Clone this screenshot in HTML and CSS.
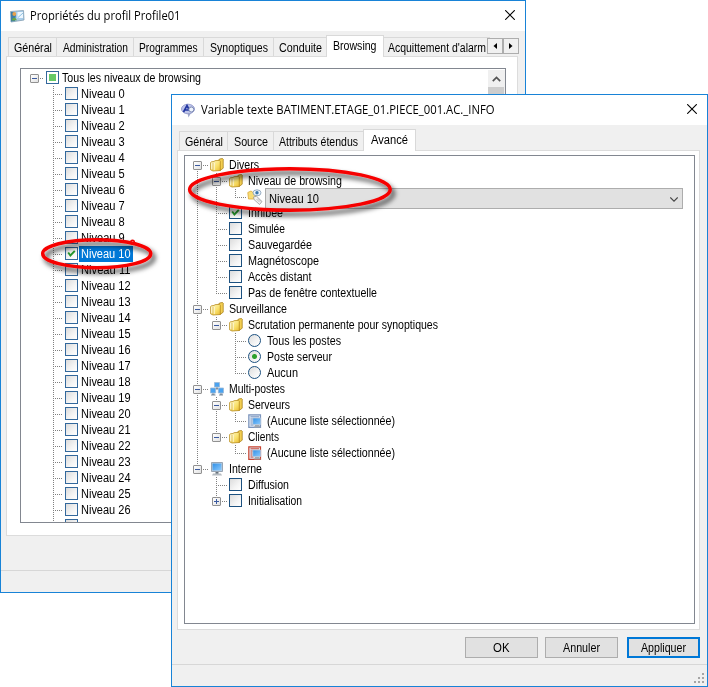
FILE: index.html
```html
<!DOCTYPE html>
<html lang="fr">
<head>
<meta charset="utf-8">
<title>Propriétés du profil</title>
<link rel="stylesheet" href="styles.css">
</head>
<body>
<svg class="defs" width="0" height="0">
  <defs>
    <linearGradient id="gold" x1="0" y1="0" x2="1" y2="1"><stop offset="0" stop-color="#fffad0"/><stop offset=".6" stop-color="#f9e06a"/><stop offset="1" stop-color="#e8b930"/></linearGradient>
    <linearGradient id="screen" x1="0" y1="0" x2="1" y2="1"><stop offset="0" stop-color="#2f8fe6"/><stop offset="1" stop-color="#8ccbff"/></linearGradient>
    <symbol id="folder" viewBox="0 0 14 14"><path d="M8.500 2.500 9.500 1 12.500.5l.7.7v9l-3.200 2.300z" fill="#f3cf52" stroke="#a8801a" stroke-width=".8"/><path d="M.6 4.500 1.500 3.800 4 3.500l1-.8 4.500-.4.8.8v9.400L3 13 .6 11.800z" fill="url(#gold)" stroke="#b88c1c" stroke-width=".8"/><path d="M3 5v7.300" stroke="#c9a030" stroke-width=".7"/><path d="M1.800 5.200v6M4.200 4.800v7.300" stroke="#fff" stroke-opacity=".8" stroke-width=".9"/></symbol>
    <symbol id="pc" viewBox="0 0 14 14"><path d="M1.500.5h11v9h-11z" fill="#c6d0da" stroke="#98a5b3"/><path d="M2.500 1.500h9V8.500h-9z" fill="url(#screen)"/><path d="M5.500 10h3v2h-3z" fill="#6b747d"/><path d="M3 11.500h8l1 2H2z" fill="#b5bbc1"/></symbol>
    <symbol id="net" viewBox="0 0 14 14"><path d="M4.500.5h5v4.500h-5zM.5 6h5.200v5H.5zM8.300 6h5.200v5H8.300z" fill="#4aa3f0" stroke="#9db8d4" stroke-width=".8"/><path d="M6 5.500h2v2H6zM2 11.500h2.500V12.500H5.500v1H1v-1h1zM10 11.500h2.500V12.500h.5v1H9v-1h1z" fill="#7f8f9f"/></symbol>
    <symbol id="list" viewBox="0 0 14 14"><path d="M.8.8h11.700v12.500H.8z" fill="#dfe8f5" stroke="currentColor" stroke-width="1.200"/><path d="M2.500 2.800h8.500M2.500 5h3M2.500 7h2M2.500 9h2M2.500 11h3" stroke="currentColor"/><path d="M4.800 4h7.900v6.500H4.800z" fill="url(#screen)" stroke="#b5c6da" stroke-width=".8"/><path d="M7 11h4l2 2.500H6z" fill="#a1a8b0"/></symbol>
    <symbol id="tag" viewBox="0 0 16 16"><path d="M.8 3.500 4 2l2 1.500h3v6.500H1.500z" fill="#f8dc74" stroke="#dba93a" stroke-width=".8"/><ellipse cx="10" cy="3.800" rx="4" ry="3" fill="#edf5fc" stroke="#7f99b2" stroke-width=".8"/><circle cx="10" cy="3.800" r="1.700" fill="#3977ad"/><path d="M6.500 8l3-.8 5.500 5.300-2.500 3L7 10.500z" fill="#f1f1f1" stroke="#999" stroke-width=".8"/><path d="M9.500 10l3 3M11 9.500l3 3" stroke="#aaa" stroke-width=".7"/></symbol>
    <symbol id="chk" viewBox="0 0 11 11"><path d="M2.200 4.500 4.400 7.500 8.800 2.800" fill="none" stroke="#26952b" stroke-width="1.900"/></symbol>
    <symbol id="close" viewBox="0 0 10 10"><path d="M.2.200 9.800 9.800M9.800.2.200 9.800" stroke="#000" stroke-width="1.100"/></symbol>
    <filter id="shadow" x="-20%" y="-40%" width="150%" height="200%"><feDropShadow dx="3" dy="4" stdDeviation="2.800" flood-color="#000" flood-opacity=".75"/></filter>
  </defs>
</svg>

<section class="window profile">
  <header class="titlebar">
    <svg class="title-icon" viewBox="0 0 15 15"><path d="M.5 2.500 13.500 1.500 14 11 1 13z" fill="#a9cdea" stroke="#829db1" stroke-width=".8"/><path d="M7.500 3h5.500v6h-5.500z" fill="#edf7ff"/><path d="M1 3h3l2 3-1 6-4 .5z" fill="#3b7ea9"/><circle cx="4.300" cy="5" r="1.900" fill="#e9a24c"/><path d="M1.500 11.500q2.500-6 5.500-.3z" fill="#69a744"/><path d="M8 8.500 13 4" stroke="#8dc1e3"/></svg>
    <h1><span data-w="150.500">Propriétés du profil Profile01</span></h1>
    <svg class="close"><use href="#close"/></svg>
  </header>
  <nav class="tabs">
    <span class="tab w49"><span data-w="38">Général</span></span><span class="tab w77"><span data-w="65">Administration</span></span><span class="tab w70"><span data-w="58.500">Programmes</span></span><span class="tab w70"><span data-w="58">Synoptiques</span></span><span class="tab w53"><span data-w="43">Conduite</span></span><span class="tab active w58"><span data-w="43.500">Browsing</span></span><span class="tab last"><span data-w="98">Acquittement d'alarm</span></span>
    <span class="spin"><i><svg viewBox="0 0 4 6"><path d="M4 0v6L.5 3z"/></svg></i><i><svg viewBox="0 0 4 6"><path d="M0 0v6l3.500-3z"/></svg></i></span>
  </nav>
  <div class="panel">
    <div class="tree">
      <div class="rows" id="levels"></div>
      <div class="scroll"><div class="up"><svg viewBox="0 0 9 6"><path d="M.8 5.200 4.500 1.500l3.700 3.700" fill="none" stroke="#555" stroke-width="1.700"/></svg></div><div class="thumb"></div></div>
    </div>
  </div>
  <footer class="status"></footer>
  <svg class="ring ring-level" viewBox="0 0 130 50"><ellipse cx="57.700" cy="19.700" rx="54" ry="14" filter="url(#shadow)"/><circle cx="93.500" cy="8" r=".8"/></svg>
</section>

<section class="window variable">
  <header class="titlebar">
    <svg class="title-icon" viewBox="0 0 15 15"><ellipse cx="7" cy="6" rx="6.500" ry="4.800" fill="#bdc4ea" stroke="#9aa0cf"/><path d="M2.500 9 6 2.500l2.500 5M4 7h3.500" stroke="#2135a0" stroke-width="1.700" fill="none"/><path d="M6.500 10l1 4.500 2.500-4.500z" fill="#9ba3c9"/><circle cx="10.300" cy="6.500" r="2.500" fill="#eef3fd" stroke="#7b89b2"/></svg>
    <h1><span data-w="293.500">Variable texte BATIMENT.ETAGE_01.PIECE_001.AC._INFO</span></h1>
    <svg class="close"><use href="#close"/></svg>
  </header>
  <nav class="tabs">
    <span class="tab w49"><span data-w="38">Général</span></span><span class="tab w46"><span data-w="34">Source</span></span><span class="tab w90"><span data-w="79">Attributs étendus</span></span><span class="tab active w53"><span data-w="37">Avancé</span></span>
  </nav>
  <div class="panel"><div class="tree"><div class="rows" id="options"></div></div></div>
  <div class="buttons"><button><span data-w="16.500">OK</span></button><button><span data-w="37">Annuler</span></button><button class="primary"><span data-w="45">Appliquer</span></button></div>
  <footer class="status"><svg class="grip" viewBox="0 0 10 10"><path d="M8 0h2v2H8zM4 4h2v2H4zM8 4h2v2H8zM0 8h2v2H0zM4 8h2v2H4zM8 8h2v2H8z" fill="#a5a5a5"/></svg></footer>
  <svg class="ring ring-option" viewBox="0 0 220 62"><ellipse cx="101.900" cy="25.500" rx="100.300" ry="20.700" filter="url(#shadow)"/></svg>
</section>
<script src="tree.js"></script>
</body>
</html>
```
FILE: styles.css
```css
* { box-sizing: border-box; }
body { margin: 0; width: 708px; height: 687px; background: #fff; overflow: hidden; position: relative; font: 12px/16px "Liberation Sans", sans-serif; color: #000; }
.defs { position: absolute; }
svg { display: block; flex: none; }
[data-w] { display: inline-block; transform-origin: 0 0; white-space: nowrap; text-align: left; vertical-align: top; }
.window { position: absolute; border: 1px solid #1883d7; background: #f0f0f0; display: flex; flex-direction: column; }
.profile { left: 0; top: 0; width: 526px; height: 593px; }
.variable { left: 171px; top: 94px; width: 537px; height: 593px; }
.titlebar { height: 30px; background: #fff; display: flex; align-items: center; padding: 0 10px 0 9px; flex: none; }
.title-icon { width: 15px; height: 15px; }
.titlebar h1 { font: 12px/16px "Open Sans", sans-serif; margin: 0 0 0 5px; white-space: nowrap; }
.close { width: 10px; height: 10px; margin: 0 0 2px auto; overflow: visible; }

.tabs { height: 26px; padding: 5px 0 0 7px; display: flex; align-items: flex-end; position: relative; z-index: 1; margin-bottom: -1px; flex: none; }
.tab { height: 19px; margin-bottom: 1px; padding-top: 3px; border: 1px solid #d9d9d9; border-left-width: 0; border-bottom: 0; text-align: center; white-space: nowrap; line-height: 14px; flex: none; }
.tab:first-child { border-left-width: 1px; }
.tab.active { height: 22px; margin-bottom: 0; background: #fff; border-left-width: 1px; margin-left: -1px; }
.tab.last { width: 106px; text-align: left; padding-left: 4px; border-right: 0; }
.w46 { width: 46px; } .w49 { width: 49px; } .w53 { width: 53px; } .w58 { width: 58px; } .w70 { width: 70px; } .w77 { width: 77px; } .w90 { width: 90px; }
.spin { position: absolute; left: 486px; top: 7px; width: 32px; height: 16px; display: flex; }
.spin i { width: 16px; height: 16px; border: 1px solid #adadad; background: #f0f0f0; display: flex; align-items: center; justify-content: center; }
.spin svg { width: 4px; height: 6px; }

.panel { border: 1px solid #dcdcdc; background: #fff; flex: none; height: 480px; }
.profile .panel { margin-left: 5px; width: 512px; padding: 11px 11px 12px 13px; }
.variable .panel { margin: 0 7px 0 5px; padding: 4px 4px 5px 6px; }
.tree { border: 1px solid #828790; height: 100%; overflow: hidden; background: #fff; display: flex; }
.rows { flex: 1; min-width: 0; padding-top: 1px; padding-left: 8px; }
#levels { padding-left: 9px; }

.row { height: 16px; display: flex; align-items: flex-start; white-space: nowrap; }
.cell { width: 19px; height: 16px; flex: none; display: grid; }
.cell.own { width: 17px; }
#levels .cell.own { width: 16px; }
.cell > * { grid-area: 1 / 1; }
.v { width: 1px; margin-left: 4px; height: 16px; background: repeating-linear-gradient(#808080 0 1px, transparent 1px 2px); }
.v.top { height: 8px; }
.v.bottom { height: 8px; margin-top: 8px; }
.h { height: 1px; margin: 8px 2px 0 4px; background: repeating-linear-gradient(90deg, #808080 0 1px, transparent 1px 2px); }
.exp { width: 9px; height: 9px; margin-top: 4px; border: 1px solid #919191; border-radius: 1px; background: linear-gradient(90deg, #3b5a9f, #3b5a9f) 50% 50% / 5px 1px no-repeat, linear-gradient(135deg, #fff, #e2e2e2); }
.exp.plus { background: linear-gradient(#3b5a9f, #3b5a9f) 50% 50% / 5px 1px no-repeat, linear-gradient(#3b5a9f, #3b5a9f) 50% 50% / 1px 5px no-repeat, linear-gradient(135deg, #fff, #e2e2e2); }
.box, .radio { width: 13px; height: 13px; margin-top: 1px; flex: none; border: 1px solid #1c5180; background: linear-gradient(135deg, #dcdcdc, #f4f4f4 60%, #fff); }
#levels .box { border-color: #33689c; }
.box svg { width: 11px; height: 11px; }
.box.partial { display: flex; align-items: center; justify-content: center; background: #fff; }
.box.partial i { width: 7px; height: 7px; background: #66c966; }
.radio { border-radius: 50%; }
.radio.on { background: radial-gradient(circle at 50% 50%, #2ba02b 0 2px, transparent 3px), linear-gradient(135deg, #dcdcdc, #fff); }
.icon { width: 14px; height: 14px; margin: 1px -1px 0 0; color: #7b93bb; }
.icon.red { color: #c8432f; }
.icon.tag { width: 16px; height: 16px; margin: 0 -2px 0 -1px; }
.label { margin-left: 6px; height: 16px; }
#levels .label { margin-left: 1px; padding: 0 2px; }
.label.selected { background: #0078d7; color: #fff; }
.combo { position: relative; z-index: 1; width: 418px; height: 21px; margin: -1px 0 0 4px; padding: 1px 4px 0 3px; border: 1px solid #adadad; background: #e1e1e1; display: flex; align-items: center; justify-content: space-between; line-height: 18px; }
.combo svg { width: 8px; height: 5px; }

.scroll { width: 17px; margin-top: 1px; background: #f0f0f0; flex: none; }
.up { height: 17px; display: flex; align-items: center; justify-content: center; }
.up svg { width: 9px; height: 6px; }
.thumb { height: 120px; margin-right: 1px; background: #cdcdcd; }

.buttons { display: flex; justify-content: flex-end; gap: 7px; padding: 7px 7px 0 0; }
.buttons button { width: 73px; height: 21px; border: 1px solid #adadad; background: #e1e1e1; font: inherit; padding: 0; color: #000; }
.buttons .primary { border: 2px solid #0078d7; margin-left: 2px; }
.status { border-top: 1px solid #d7d7d7; margin-top: auto; height: 22px; flex: none; display: flex; justify-content: flex-end; align-items: flex-end; padding: 3px; }
.grip { width: 10px; height: 10px; }

.ring { position: absolute; z-index: 2; overflow: visible; fill: none; stroke: #f60000; stroke-width: 3.5; }
.ring-level { left: 38px; top: 233px; width: 130px; height: 50px; }
.ring-option { left: 16px; top: 69px; width: 220px; height: 62px; }
```
FILE: tree.js
```js
// Item: [kind, text, text width, children]
const levelItems = [];
for (let i = 0; i < 27; i++) {
  levelItems.push([i === 10 ? "checked" : "box", "Niveau " + i, i < 10 ? 43.8 : 49.5]);
}
levelItems.push(["box", "", 0]);

const levelTree = [["partial", "Tous les niveaux de browsing", 139, levelItems]];

const optionTree = [
  ["folder", "Divers", 30, [
    ["folder", "Niveau de browsing", 94, [["combo", "Niveau 10", 50]]],
    ["checked", "Inhibée", 35],
    ["box", "Simulée", 37],
    ["box", "Sauvegardée", 64],
    ["box", "Magnétoscope", 71],
    ["box", "Accès distant", 63.5],
    ["box", "Pas de fenêtre contextuelle", 129],
  ]],
  ["folder", "Surveillance", 58, [
    ["folder", "Scrutation permanente pour synoptiques", 190, [
      ["radio", "Tous les postes", 74],
      ["radio on", "Poste serveur", 65],
      ["radio", "Aucun", 31],
    ]],
  ]],
  ["net", "Multi-postes", 56, [
    ["folder", "Serveurs", 42, [["list", "(Aucune liste sélectionnée)", 128]]],
    ["folder", "Clients", 31, [["list red", "(Aucune liste sélectionnée)", 128]]],
  ]],
  ["pc", "Interne", 33, [
    ["box", "Diffusion", 41],
    ["box", "Initialisation", 54, []],
  ]],
];

function glyph(kind) {
  if (kind === "box") return '<span class="box"></span>';
  if (kind === "checked") return '<span class="box"><svg><use href="#chk"/></svg></span>';
  if (kind === "partial") return '<span class="box partial"><i></i></span>';
  if (kind.startsWith("radio")) return `<span class="${kind}"></span>`;
  const id = kind === "combo" ? "tag" : kind.split(" ")[0];
  return `<svg class="icon ${kind === "combo" ? "tag" : kind}"><use href="#${id}"/></svg>`;
}

function render(items, ancestors, isRoot) {
  return items.map(([kind, text, width, children], i) => {
    const last = i === items.length - 1;
    const first = isRoot && i === 0;
    let line = "";
    if (!first) line += '<i class="v top"></i>';
    if (!last) line += '<i class="v bottom"></i>';
    const exp = children ? `<i class="exp${children.length ? "" : " plus"}"></i>` : "";
    const cells = ancestors.map((open) => `<span class="cell">${open ? '<i class="v"></i>' : ""}</span>`).join("");
    const value = `<span data-w="${width}">${text}</span>`;
    const label = kind === "combo"
      ? `<span class="combo">${value}<svg viewBox="0 0 8 5"><path d="M.3.500 4 4.200 7.700.5" fill="none" stroke="#444" stroke-width="1.100"/></svg></span>`
      : `<span class="label${text === "Niveau 10" ? " selected" : ""}">${value}</span>`;
    return `<div class="row">${cells}<span class="cell own">${line}<i class="h"></i>${exp}</span>${glyph(kind)}${label}</div>`
      + (children ? render(children, ancestors.concat(!last), false) : "");
  }).join("");
}

document.getElementById("levels").innerHTML = render(levelTree, [], true);
document.getElementById("options").innerHTML = render(optionTree, [], true);

// Condense each label to its own width
document.querySelectorAll("[data-w]").forEach((el) => {
  if (!el.textContent) return;
  const natural = el.getBoundingClientRect().width;
  el.style.width = el.dataset.w + "px";
  el.style.transform = "scaleX(" + (el.dataset.w / natural).toFixed(4) + ")";
  // The scale also narrows the box, so the margin keeps its footprint
  const scaled = el.getBoundingClientRect().width;
  el.style.width = natural + "px";
  el.style.marginRight = (el.dataset.w - natural) + "px";
});
```
